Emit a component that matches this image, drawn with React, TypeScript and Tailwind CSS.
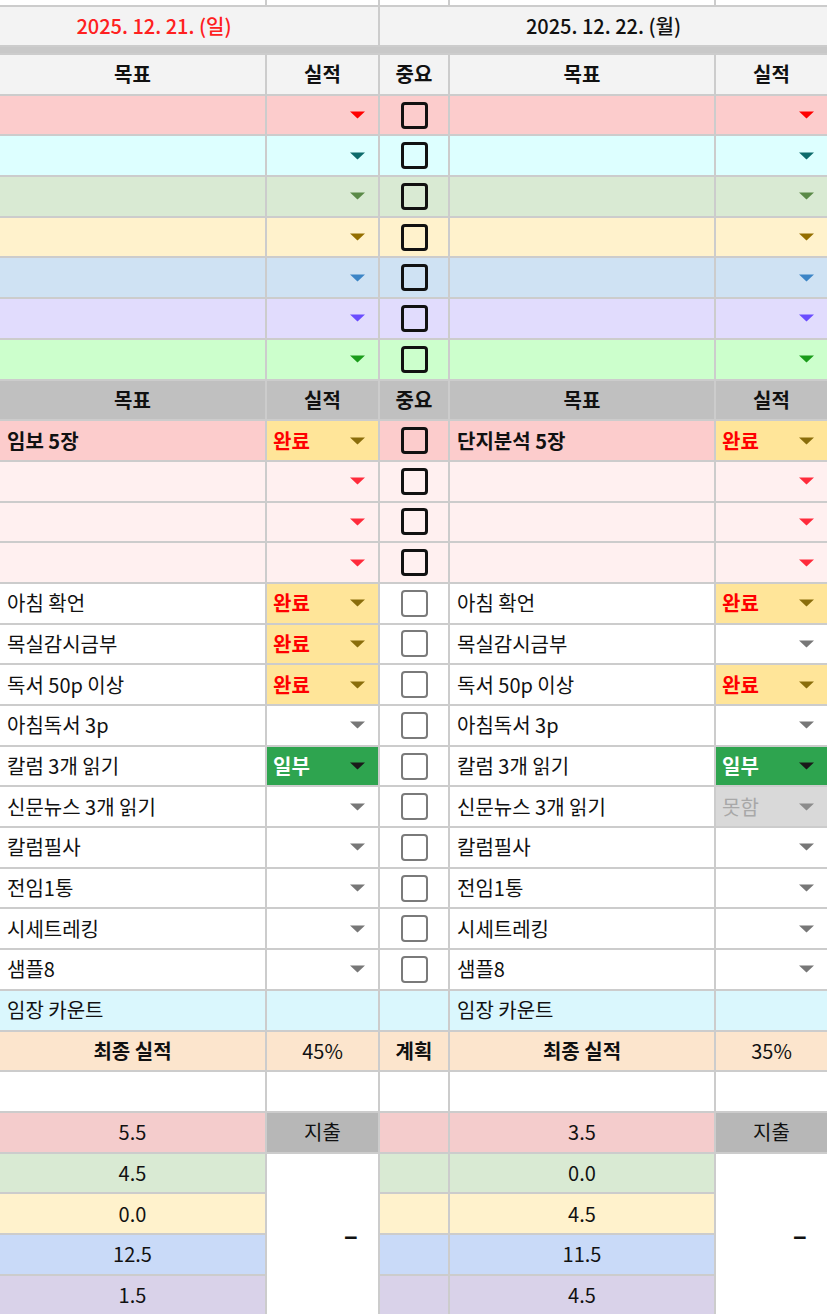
import React from "react";

type Status = "done" | "part" | "none" | "empty";

const FONT = { fontFamily: '"Noto Sans CJK KR", "Noto Sans", sans-serif' };

// 드롭다운 화살표 (스프레드시트 셀 안의 작은 삼각형)
const Arrow = ({ color }: { color: string }) => (
  <svg width="15" height="8" viewBox="0 0 15 8" className="shrink-0">
    <path d="M0 0.5h15L7.5 7.5z" fill={color} />
  </svg>
);

const Box = ({ dark }: { dark?: boolean }) =>
  dark ? (
    <div className="h-[27px] w-[27px] rounded-[4px] border-[3px] border-[#111]" />
  ) : (
    <div className="h-[27px] w-[27px] rounded-[4px] border-[2.5px] border-[#7a7a7a] bg-white" />
  );

const colorRows = [
  { bg: "bg-[#fccccc]", arrow: "#ff0000" },
  { bg: "bg-[#ddffff]", arrow: "#0d6b6b" },
  { bg: "bg-[#d9ead3]", arrow: "#5b8a48" },
  { bg: "bg-[#fff2cc]", arrow: "#946f00" },
  { bg: "bg-[#cfe2f3]", arrow: "#3d85c6" },
  { bg: "bg-[#e1dcfd]", arrow: "#6a4dff" },
  { bg: "bg-[#ccffcc]", arrow: "#1a9c1a" },
];

const tasks: [string, Status, Status][] = [
  ["아침 확언", "done", "done"],
  ["목실감시금부", "done", "empty"],
  ["독서 50p 이상", "done", "done"],
  ["아침독서 3p", "empty", "empty"],
  ["칼럼 3개 읽기", "part", "part"],
  ["신문뉴스 3개 읽기", "empty", "none"],
  ["칼럼필사", "empty", "empty"],
  ["전임1통", "empty", "empty"],
  ["시세트레킹", "empty", "empty"],
  ["샘플8", "empty", "empty"],
];

const money: [string, string, string][] = [
  ["5.5", "3.5", "bg-[#f4cccc]"],
  ["4.5", "0.0", "bg-[#d9ead3]"],
  ["0.0", "4.5", "bg-[#fff2cc]"],
  ["12.5", "11.5", "bg-[#c9daf8]"],
  ["1.5", "4.5", "bg-[#d9d2e9]"],
];

function StatusCell({ s }: { s: Status }) {
  if (s === "done")
    return (
      <div className="flex items-center justify-between bg-[#ffe599] pl-[6px] pr-[13px] font-bold text-[#ff0000]">
        <span>완료</span>
        <Arrow color="#8a6d0b" />
      </div>
    );
  if (s === "part")
    return (
      <div className="flex items-center justify-between bg-[#2ea44f] pl-[6px] pr-[13px] font-bold text-white">
        <span>일부</span>
        <Arrow color="#1a1a1a" />
      </div>
    );
  if (s === "none")
    return (
      <div className="flex items-center justify-between bg-[#d9d9d9] pl-[6px] pr-[13px] text-[#a8a8a8]">
        <span>못함</span>
        <Arrow color="#8c8c8c" />
      </div>
    );
  return (
    <div className="flex items-center justify-end bg-white pr-[13px]">
      <Arrow color="#777777" />
    </div>
  );
}

export default function App() {
  return (
    <div className="h-[1315px] w-[827px] overflow-hidden bg-white text-[20px] leading-none text-[#111]" style={FONT}>
      <div className="grid grid-cols-[265px_111px_68px_264px_111px] grid-rows-[5px_38px_6px] auto-rows-[38.7px] gap-[2px] bg-[#cccccc]">
        {/* 위쪽 잘린 행 */}
        {[0, 1, 2, 3, 4].map((i) => (
          <div key={i} className="bg-white" />
        ))}

        {/* 날짜 */}
        <div className="col-span-2 flex items-center justify-center bg-[#f3f3f3] pr-[70px] font-medium text-[#ff2020]">
          2025. 12. 21. (일)
        </div>
        <div className="col-span-3 flex items-center justify-center bg-[#f3f3f3] font-medium">
          2025. 12. 22. (월)
        </div>
        <div className="col-span-5 bg-[#c8c8c8]" />

        {/* 헤더 */}
        {["목표", "실적", "중요", "목표", "실적"].map((t, i) => (
          <div key={i} className="flex items-center justify-center bg-[#f3f3f3] font-bold">
            {t}
          </div>
        ))}

        {/* 색상 목표 행 */}
        {colorRows.map((r, i) => (
          <React.Fragment key={i}>
            <div className={r.bg} />
            <div className={`${r.bg} flex items-center justify-end pr-[13px]`}>
              <Arrow color={r.arrow} />
            </div>
            <div className={`${r.bg} flex items-center justify-center`}>
              <Box dark />
            </div>
            <div className={r.bg} />
            <div className={`${r.bg} flex items-center justify-end pr-[13px]`}>
              <Arrow color={r.arrow} />
            </div>
          </React.Fragment>
        ))}

        {/* 두번째 헤더 */}
        {["목표", "실적", "중요", "목표", "실적"].map((t, i) => (
          <div key={i} className="flex items-center justify-center bg-[#c0c0c0] font-bold">
            {t}
          </div>
        ))}

        {/* 주요 목표 */}
        <div className="flex items-center bg-[#fccccc] pl-[7px] font-bold">임보 5장</div>
        <StatusCell s="done" />
        <div className="flex items-center justify-center bg-[#fccccc]">
          <Box dark />
        </div>
        <div className="flex items-center bg-[#fccccc] pl-[7px] font-bold">단지분석 5장</div>
        <StatusCell s="done" />

        {[0, 1, 2].map((i) => (
          <React.Fragment key={i}>
            <div className="bg-[#fff0f0]" />
            <div className="flex items-center justify-end bg-[#fff0f0] pr-[13px]">
              <Arrow color="#ff2b3b" />
            </div>
            <div className="flex items-center justify-center bg-[#fff0f0]">
              <Box dark />
            </div>
            <div className="bg-[#fff0f0]" />
            <div className="flex items-center justify-end bg-[#fff0f0] pr-[13px]">
              <Arrow color="#ff2b3b" />
            </div>
          </React.Fragment>
        ))}

        {/* 루틴 */}
        {tasks.map(([name, a, b]) => (
          <React.Fragment key={name}>
            <div className="flex items-center bg-white pl-[7px]">{name}</div>
            <StatusCell s={a} />
            <div className="flex items-center justify-center bg-white">
              <Box />
            </div>
            <div className="flex items-center bg-white pl-[7px]">{name}</div>
            <StatusCell s={b} />
          </React.Fragment>
        ))}

        <div className="flex items-center bg-[#daf7fd] pl-[7px]">임장 카운트</div>
        <div className="bg-[#daf7fd]" />
        <div className="bg-[#daf7fd]" />
        <div className="flex items-center bg-[#daf7fd] pl-[7px]">임장 카운트</div>
        <div className="bg-[#daf7fd]" />

        <div className="flex items-center justify-center bg-[#fce5cd] font-bold">최종 실적</div>
        <div className="flex items-center justify-center bg-[#fce5cd]">45%</div>
        <div className="flex items-center justify-center bg-[#fce5cd] font-bold">계획</div>
        <div className="flex items-center justify-center bg-[#fce5cd] font-bold">최종 실적</div>
        <div className="flex items-center justify-center bg-[#fce5cd]">35%</div>

        {[0, 1, 2, 3, 4].map((i) => (
          <div key={i} className="bg-white" />
        ))}

        {/* 지출 */}
        {money.map(([a, b, bg], i) => (
          <React.Fragment key={i}>
            <div className={`${bg} col-start-1 flex items-center justify-center`}>{a}</div>
            {i === 0 && <div className="flex items-center justify-center bg-[#b7b7b7]">지출</div>}
            {i === 1 && (
              <div className="row-span-4 flex items-center justify-end bg-white pr-[20px] text-[26px] font-bold">–</div>
            )}
            <div className={`${bg} col-start-3`} />
            <div className={`${bg} col-start-4 flex items-center justify-center`}>{b}</div>
            {i === 0 && <div className="flex items-center justify-center bg-[#b7b7b7]">지출</div>}
            {i === 1 && (
              <div className="row-span-4 flex items-center justify-end bg-white pr-[20px] text-[26px] font-bold">–</div>
            )}
          </React.Fragment>
        ))}
      </div>
    </div>
  );
}
